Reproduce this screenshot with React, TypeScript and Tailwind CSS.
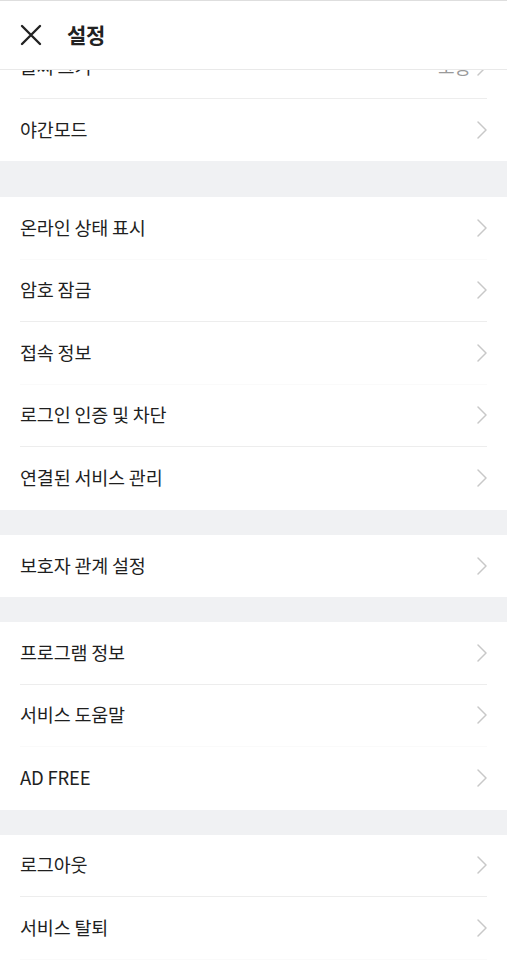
import React from "react";

const font = { fontFamily: '"Noto Sans CJK KR", "Noto Sans", sans-serif' };

function Chevron() {
  return (
    <svg width="14" height="20" viewBox="0 0 14 20" fill="none" className="shrink-0">
      <path d="M3 2 L11 10 L3 18" stroke="#c8c8c8" strokeWidth="1.5" strokeLinecap="round" strokeLinejoin="round" />
    </svg>
  );
}

type Item = { label: string; value?: string; divider?: "strong" | "faint" | "none" };

function Row({ item }: { item: Item }) {
  const d = item.divider ?? "none";
  return (
    <div className="h-[62.5px] px-5 flex flex-col">
      <div
        className={
          "flex-1 flex items-center justify-between " +
          (d === "strong" ? "border-b border-[#ededed]" : d === "faint" ? "border-b border-[#fafafa]" : "")
        }
      >
        <span className="text-[18.5px] text-[#1f1f1f] tracking-[-0.2px]">{item.label}</span>
        <div className="flex items-center gap-1 -mr-[2px]">
          {item.value && <span className="text-[18px] text-[#9a9a9a]">{item.value}</span>}
          <Chevron />
        </div>
      </div>
    </div>
  );
}

function Section({ items }: { items: Item[] }) {
  return (
    <div className="bg-white">
      {items.map((it) => (
        <Row key={it.label} item={it} />
      ))}
    </div>
  );
}

export default function App() {
  return (
    <div className="relative w-[507px] h-[960px] overflow-hidden bg-white" style={font}>
      <div className="pt-[36px] flex flex-col">
        <Section
          items={[
            { label: "글씨 크기", value: "보통", divider: "strong" },
            { label: "야간모드" },
          ]}
        />
        <div className="h-[36px] bg-[#f0f1f3]" />
        <Section
          items={[
            { label: "온라인 상태 표시", divider: "faint" },
            { label: "암호 잠금", divider: "strong" },
            { label: "접속 정보", divider: "faint" },
            { label: "로그인 인증 및 차단", divider: "strong" },
            { label: "연결된 서비스 관리" },
          ]}
        />
        <div className="h-[25px] bg-[#f0f1f3]" />
        <Section items={[{ label: "보호자 관계 설정" }]} />
        <div className="h-[25px] bg-[#f0f1f3]" />
        <Section
          items={[
            { label: "프로그램 정보", divider: "strong" },
            { label: "서비스 도움말", divider: "faint" },
            { label: "AD FREE" },
          ]}
        />
        <div className="h-[25px] bg-[#f0f1f3]" />
        <Section
          items={[
            { label: "로그아웃", divider: "strong" },
            { label: "서비스 탈퇴", divider: "faint" },
          ]}
        />
      </div>

      <div className="absolute top-0 left-0 right-0 h-[70px] bg-white border-t border-[#dedede] border-b border-b-[#e9e9e9] flex items-center px-5 gap-[25px]">
        <svg width="22" height="22" viewBox="0 0 22 22" fill="none">
          <path d="M2 2 L20 20 M20 2 L2 20" stroke="#222" strokeWidth="2.4" strokeLinecap="round" />
        </svg>
        <span className="text-[21px] font-bold text-[#222] tracking-[-0.3px]">설정</span>
      </div>
    </div>
  );
}
